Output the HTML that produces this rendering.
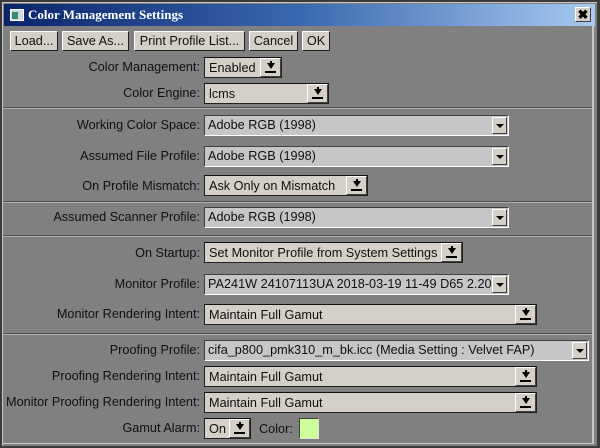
<!DOCTYPE html>
<html><head><style>
*{margin:0;padding:0;box-sizing:border-box}
body{width:600px;height:448px;background:#3a3a3a;position:relative;overflow:hidden;font-family:"Liberation Sans",Arial,sans-serif;font-size:12.7px;color:#101010}
#win{position:absolute;left:2px;top:2px;width:595px;height:444px;background:#808080;border-left:1px solid #c8c8c8;border-top:1px solid #c8c8c8}
#title{position:absolute;left:4px;top:4px;width:591px;height:22px;background:linear-gradient(90deg,#0a246a,#3a68b0 50%,#a6caf0);color:#fff;font-family:"Liberation Serif",serif;font-weight:bold;font-size:13px;line-height:22px;padding-left:24px}
#ticon{position:absolute;left:6px;top:5px;width:14px;height:12px;background:#d0d8e0;border:1px solid #fff}
#ticon:after{content:"";position:absolute;left:1px;top:2px;width:6px;height:7px;background:#3a8a7a}
#close{position:absolute;left:575px;top:7px;width:16px;height:15px;background:#d4d0c8;border:1px solid;border-color:#fff #404040 #404040 #fff;font:bold 13px "Liberation Sans",sans-serif;color:#000;text-align:center;line-height:13px}
#rb{position:absolute;left:592px;top:26px;width:2px;height:418px;background:#c8c8c8}
#bb{position:absolute;left:3px;top:443px;width:591px;height:1px;background:#c8c8c8}
.btn{position:absolute;top:31px;height:20px;background:#d4d0c8;border:1px solid;border-color:#fff #202020 #202020 #fff;text-align:center;line-height:18px;font-size:12.7px;white-space:nowrap}
.lbl{position:absolute;right:400px;text-align:right;white-space:nowrap}
.mb{position:absolute;height:21px;background:#d4d0c8;border:1px solid #202020;border-top-color:#101010;padding-left:4px;line-height:20px;white-space:nowrap;overflow:hidden}
.mb .b{position:absolute;right:0;top:0;width:21px;height:19px;background:#d4d0c8;border:1px solid;border-color:#fff #404040 #404040 #fff}
.mb .b:before{content:"";position:absolute;top:4px;width:0;height:0;border-left:4px solid transparent;border-right:4px solid transparent;border-top:6px solid #000;left:6px}
.mb .b:after{content:"";position:absolute;left:4px;top:12px;width:11px;height:2px;background:#000}
.mb .b i{position:absolute;left:9px;top:2px;width:2px;height:4px;background:#000}
.cb{position:absolute;height:21px;background:#c6c6c6;border:1px solid;border-color:#404040 #fff #fff #404040;padding-left:3px;line-height:19px;white-space:nowrap;overflow:hidden}
.cb .b{position:absolute;right:1px;top:1px;width:15px;height:17px;background:#d4d0c8;border:1px solid;border-color:#fff #404040 #404040 #fff}
.cb .b:after{content:"";position:absolute;left:3px;top:6px;border-left:4px solid transparent;border-right:4px solid transparent;border-top:4px solid #000}
.sep{position:absolute;left:3px;width:589px;height:2px;border-top:1px solid #505050;border-bottom:1px solid #b0b0b0}
</style></head><body>
<div id="win"></div>
<div id="title"><div id="ticon"></div>Color Management Settings</div>
<div id="close">✖</div>
<div id="rb"></div><div id="bb"></div>

<div class="btn" style="left:10px;width:48px">Load...</div>
<div class="btn" style="left:62px;width:67px">Save As...</div>
<div class="btn" style="left:134px;width:111px">Print Profile List...</div>
<div class="btn" style="left:249px;width:49px">Cancel</div>
<div class="btn" style="left:302px;width:28px">OK</div>

<div class="lbl" style="top:60px">Color Management:</div>
<div class="mb" style="left:204px;top:57px;width:78px">Enabled<div class="b"><i></i></div></div>
<div class="lbl" style="top:86px">Color Engine:</div>
<div class="mb" style="left:204px;top:83px;width:125px">lcms<div class="b"><i></i></div></div>

<div class="sep" style="top:107px"></div>

<div class="lbl" style="top:118px">Working Color Space:</div>
<div class="cb" style="left:204px;top:115px;width:305px">Adobe RGB (1998)<div class="b"></div></div>
<div class="lbl" style="top:149px">Assumed File Profile:</div>
<div class="cb" style="left:204px;top:146px;width:305px">Adobe RGB (1998)<div class="b"></div></div>
<div class="lbl" style="top:179px">On Profile Mismatch:</div>
<div class="mb" style="left:204px;top:175px;width:164px">Ask Only on Mismatch<div class="b"><i></i></div></div>

<div class="sep" style="top:201px"></div>

<div class="lbl" style="top:210px">Assumed Scanner Profile:</div>
<div class="cb" style="left:204px;top:207px;width:305px">Adobe RGB (1998)<div class="b"></div></div>

<div class="sep" style="top:235px"></div>

<div class="lbl" style="top:246px">On Startup:</div>
<div class="mb" style="left:204px;top:242px;width:259px">Set Monitor Profile from System Settings<div class="b"><i></i></div></div>
<div class="lbl" style="top:277px">Monitor Profile:</div>
<div class="cb" style="left:204px;top:274px;width:305px">PA241W 24107113UA 2018-03-19 11-49 D65 2.20<div class="b"></div></div>
<div class="lbl" style="top:307px">Monitor Rendering Intent:</div>
<div class="mb" style="left:204px;top:304px;width:333px">Maintain Full Gamut<div class="b"><i></i></div></div>

<div class="sep" style="top:333px"></div>

<div class="lbl" style="top:343px">Proofing Profile:</div>
<div class="cb" style="left:204px;top:340px;width:385px">cifa_p800_pmk310_m_bk.icc (Media Setting : Velvet FAP)<div class="b"></div></div>
<div class="lbl" style="top:369px">Proofing Rendering Intent:</div>
<div class="mb" style="left:204px;top:366px;width:333px">Maintain Full Gamut<div class="b"><i></i></div></div>
<div class="lbl" style="top:395px">Monitor Proofing Rendering Intent:</div>
<div class="mb" style="left:204px;top:392px;width:333px">Maintain Full Gamut<div class="b"><i></i></div></div>
<div class="lbl" style="top:421px">Gamut Alarm:</div>
<div class="mb" style="left:204px;top:418px;width:47px">On<div class="b"><i></i></div></div>
<div style="position:absolute;left:259px;top:422px">Color:</div>
<div style="position:absolute;left:299px;top:418px;width:20px;height:21px;background:#ccff99;border:1px solid;border-color:#404040 #e0e0e0 #e0e0e0 #404040"></div>
</body></html>
